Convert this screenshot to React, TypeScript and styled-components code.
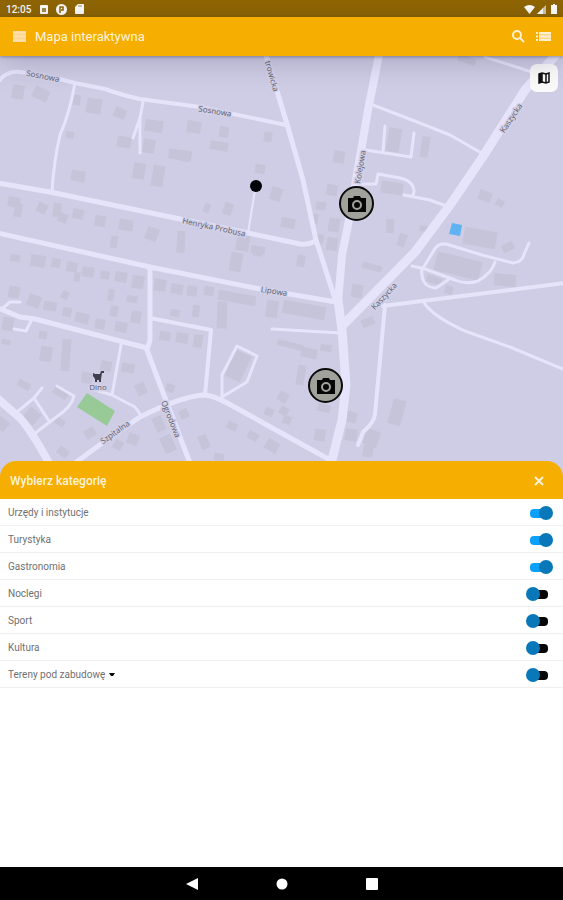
import React, { useState } from 'react';
import styled, { createGlobalStyle } from 'styled-components';

const GlobalStyle = createGlobalStyle`
  * { box-sizing: border-box; }
  body { margin: 0; background: #fff; font-family: Roboto, "Open Sans", sans-serif; }
  button { font: inherit; color: inherit; border: 0; padding: 0; background: none; cursor: pointer; }
`;

const Screen = styled.div`
  display: flex;
  flex-direction: column;
  min-height: 100vh;
`;

const StatusBar = styled.div`
  display: flex;
  align-items: center;
  justify-content: space-between;
  height: 17px;
  padding: 1px 5px 0 6px;
  background: #906600;
  color: #fff;
  font-size: 10px;
  font-weight: 500;
  svg { display: block; }
`;

const StatusGroup = styled.div<{ $gap: number }>`
  display: flex;
  align-items: center;
  gap: ${(p) => p.$gap}px;
`;

const Clock = styled.span`
  margin-right: 1px;
`;

const AppBar = styled.header`
  position: relative;
  z-index: 1;
  display: flex;
  align-items: center;
  height: 39px;
  padding: 0 12px 0 13px;
  background: #f6ae00;
  color: #fff3dc;
  box-shadow: 0 1px 3px rgba(40, 40, 70, 0.4), 0 4px 30px rgba(40, 40, 70, 0.25);
`;

const Title = styled.h1`
  flex: 1;
  margin: 0 0 0 9px;
  font-size: 13px;
  font-weight: 400;
  line-height: 16px;
`;

const IconButton = styled.button`
  display: flex;
  align-items: center;
  justify-content: center;
  svg { display: block; }
`;

const Actions = styled.div`
  display: flex;
  align-items: center;
  gap: 10px;
`;

const MapArea = styled.main`
  position: relative;
  height: 420px;
  overflow: hidden;
  background: #cfcde5;
`;

const MapDrawing = styled.svg`
  display: block;
  width: 100%;
  height: 100%;
`;

const LayerButton = styled(IconButton)`
  position: absolute;
  top: 8px;
  right: 5px;
  width: 28px;
  height: 28px;
  border-radius: 7px;
  background: #fafafa;
  color: #111;
`;

const Pin = styled.button<{ $x: number; $y: number }>`
  position: absolute;
  left: ${(p) => p.$x}px;
  top: ${(p) => p.$y}px;
  display: flex;
  align-items: center;
  justify-content: center;
  width: 35px;
  height: 35px;
  border: 2px solid #0b0b0b;
  border-radius: 50%;
  background: #a2a29c;
`;

const Sheet = styled.section`
  position: relative;
  z-index: 1;
  flex: 1;
  margin-top: -15px;
`;

const SheetHeader = styled.div`
  display: flex;
  align-items: center;
  justify-content: space-between;
  height: 38px;
  padding: 2px 18px 0 10px;
  border-radius: 16px 16px 0 0;
  background: #f6ae00;
  color: #fff3dc;
`;

const SheetTitle = styled.h2`
  margin: 0;
  font-size: 12px;
  font-weight: 500;
  line-height: 16px;
`;

const CategoryList = styled.ul`
  margin: 0;
  padding: 0;
  list-style: none;
  background: #fff;
`;

const Category = styled.li`
  display: flex;
  align-items: center;
  justify-content: space-between;
  height: 27px;
  padding: 1px 10px 0 8px;
  border-bottom: 1px solid #efefef;
  color: #707070;
  font-size: 10px;
  line-height: 12px;
`;

const CategoryName = styled.div`
  display: flex;
  align-items: center;
  gap: 4px;
`;

const Toggle = styled.input`
  position: relative;
  appearance: none;
  width: 27px;
  height: 14px;
  margin: 0;
  cursor: pointer;
  &::before {
    content: '';
    position: absolute;
    top: 3px;
    left: 4px;
    width: 18px;
    height: 9px;
    border-radius: 4px;
    background: #080604;
  }
  &::after {
    content: '';
    position: absolute;
    top: 0;
    left: 0;
    width: 14px;
    height: 14px;
    border-radius: 50%;
    background: #0878b8;
  }
  &:checked::before { background: #0ba1fb; }
  &:checked::after { left: 13px; }
`;

const NavBar = styled.nav`
  display: flex;
  align-items: center;
  justify-content: center;
  gap: 76px;
  height: 33px;
  background: #000;
  color: #fff;
`;

const NavButton = styled(IconButton)`
  width: 14px;
  height: 14px;
`;

type Building = [x: number, y: number, w: number, h: number, r?: number];

const buildings: Building[] = [
  [18, 92, 12, 14], [41, 94, 16, 12, 25], [77, 100, 7, 10], [94, 106, 15, 15], [120, 113, 12, 10, 25],
  [70, 135, 8, 7], [154, 126, 18, 12], [194, 127, 14, 12], [124, 142, 14, 11], [149, 146, 12, 14],
  [180, 155, 23, 10], [139, 171, 12, 16], [158, 176, 12, 21], [78, 176, 14, 11], [14, 202, 12, 10],
  [18, 210, 8, 14], [42, 208, 10, 10, 25], [57, 210, 8, 14], [63, 218, 9, 9, 25], [78, 214, 11, 10], [100, 221, 11, 11],
  [126, 225, 14, 11], [152, 234, 12, 13, 20], [114, 242, 7, 12], [181, 242, 8, 22, 4], [224, 132, 9, 11],
  [219, 146, 18, 9], [268, 137, 8, 10], [185, 156, 11, 11], [260, 169, 10, 9], [276, 194, 11, 13, 18],
  [207, 208, 6, 9, 20], [228, 209, 9, 12, 20], [339, 157, 11, 12], [332, 190, 11, 11], [321, 206, 10, 8],
  [288, 223, 14, 10], [334, 225, 11, 14], [315, 219, 6, 10], [332, 244, 11, 13], [243, 242, 13, 18],
  [258, 252, 9, 8], [320, 239, 7, 9], [394, 140, 13, 24], [425, 147, 8, 21], [392, 188, 22, 12],
  [390, 226, 8, 14, 2], [402, 240, 8, 13, 20], [425, 229, 11, 6], [485, 196, 13, 10, 22], [500, 203, 8, 7, 28],
  [480, 238, 33, 17, 10], [508, 247, 12, 8, -25], [467, 60, 18, 7, 20], [458, 266, 46, 19, 14],
  [372, 267, 20, 6, 16], [434, 280, 15, 7, 18], [449, 290, 8, 8, 15], [505, 280, 22, 12, 5],
  [368, 322, 13, 8, -25], [397, 412, 13, 26, 15], [372, 438, 14, 16, 20], [368, 451, 10, 12],
  [15, 258, 10, 7], [38, 261, 15, 12], [56, 263, 9, 9], [72, 267, 11, 10], [77, 277, 6, 9], [88, 272, 12, 10],
  [105, 275, 9, 8], [121, 277, 12, 10], [138, 282, 12, 13], [160, 285, 12, 12], [177, 289, 12, 10],
  [192, 291, 10, 10], [14, 292, 11, 12], [34, 301, 13, 12, 20], [50, 306, 13, 9], [65, 295, 7, 8, 30],
  [67, 312, 9, 9], [82, 318, 14, 10, 15], [111, 295, 6, 12], [132, 299, 11, 7], [114, 311, 8, 11],
  [136, 317, 10, 12], [100, 324, 10, 10], [121, 327, 12, 10], [8, 324, 11, 13], [43, 335, 8, 8],
  [46, 354, 12, 15], [66, 355, 9, 32, 4], [6, 342, 9, 5], [106, 366, 11, 10, 15], [87, 378, 11, 11],
  [128, 368, 13, 9], [165, 336, 11, 9], [182, 338, 12, 10], [198, 341, 9, 13], [175, 313, 9, 7],
  [196, 311, 7, 12], [141, 389, 10, 12, -25], [170, 388, 9, 8, 20], [24, 385, 13, 7, 28], [61, 392, 15, 10, 30],
  [32, 416, 14, 14, 40], [60, 422, 10, 7, 35], [2, 424, 12, 11, 40], [63, 452, 11, 8, 35], [90, 433, 11, 9, -30],
  [118, 445, 9, 9, 30], [133, 439, 11, 11, 20], [159, 424, 10, 15, -25], [184, 414, 9, 9, -25],
  [168, 444, 12, 17, -25], [236, 262, 12, 19, 10], [258, 250, 14, 8], [301, 261, 8, 12], [209, 291, 10, 9],
  [237, 298, 38, 10, 10], [222, 315, 10, 27, 2], [272, 309, 12, 17], [304, 310, 43, 13, 10], [357, 291, 11, 13],
  [238, 366, 17, 28, 25], [290, 345, 26, 6, 14], [309, 353, 16, 10, 12], [326, 348, 11, 7], [301, 375, 8, 20, 10],
  [283, 397, 10, 10, 30], [269, 412, 9, 8, 20], [284, 411, 9, 8, 30], [287, 420, 8, 8, 20], [232, 426, 10, 8, 25],
  [253, 436, 11, 8, 30], [204, 442, 9, 14, -25], [272, 446, 13, 11, 30], [324, 408, 13, 8, 15],
  [320, 435, 11, 12], [219, 457, 10, 7], [351, 417, 12, 11, 15], [351, 435, 12, 12],
];

const roads: [width: number, d: string][] = [
  [4, 'M-2 82Q7 70 20 72Q50 76 75 83L105 89Q125 96 140 99L200 107L286 125'],
  [3, 'M75 83Q70 112 60 135Q54 160 52 191'],
  [3, 'M143 102L140 118L133 138M140 118V153'],
  [5, 'M-2 183L50 192L180 219L248 233L300 244Q308 245 316 241'],
  [5, 'M-2 233L150 267L260 289L336 302'],
  [5, 'M266 55L287 124L303 180L316 240L336 302'],
  [8, 'M379 55L368 110L350 215L342 255L338 302'],
  [9, 'M560 50L525 90L482 158L450 205L415 252L342 326'],
  [9, 'M338 300L342 330L346 385L342 420L331 464'],
  [3, 'M373 105L425 125L450 135L485 155M485 57L532 72'],
  [3, 'M385 126L383 151M366 150L411 157L414 133'],
  [3, 'M357 184H376L378 174L400 178Q414 181 414 192Q414 198 404 195L430 200L449 207'],
  [3, 'M412 266L425 269L455 280Q466 285 478 281Q492 273 495 262'],
  [3, 'M422 270L434 250Q438 243 446 244L482 255L513 263Q523 262 524 254L529 243M422 268Q420 287 436 288L448 280'],
  [4, 'M383 306L430 300L565 283M385 305L380 360L375 414Q374 423 363 432L358 445'],
  [3, 'M423 301Q430 315 465 331L510 347L565 370'],
  [3, 'M272 329L341 333'],
  [5, 'M75 463L105 441L140 417Q180 397 203 395Q213 395 229 404L332 461'],
  [5, 'M150 267V340L147 350L162 390L190 463'],
  [4, 'M150 318L211 330L205 395'],
  [5, 'M-2 308L20 317L35 319L147 348'],
  [3, 'M3 308L10 302H20M14 329L26 331L31 321'],
  [3, 'M121 345L112 395M95 390L112 395L135 407L140 414'],
  [8, 'M-3 398L20 418Q33 433 50 465'],
  [3, 'M17 412L34 398L42 388M34 398L49 421M34 434L55 418Q72 407 74 396L57 386'],
  [3, 'M222 400V375L237 346L257 356L247 382L222 397'],
  [2, 'M255 190L248 233'],
];

const streets: [name: string, x: number, y: number, angle: number][] = [
  ['Sosnowa', 43, 76, 11],
  ['Sosnowa', 215, 111, 9],
  ['trowicka', 272, 76, 74],
  ['Henryka Probusa', 214, 227, 12],
  ['Lipowa', 274, 291, 9],
  ['Kolejowa', 360, 167, -80],
  ['Kaszycka', 511, 118, -56],
  ['Kaszycka', 384, 296, -47],
  ['Szpitalna', 115, 432, -36],
  ['Ogrodowa', 171, 419, 68],
];

function TownMap() {
  return (
    <MapDrawing viewBox="0 56 563 420" preserveAspectRatio="xMidYMin slice" role="img" aria-label="Mapa">
      <g fill="#c5c4d9">
        {buildings.map(([x, y, w, h, r = 9], i) => (
          <rect key={i} x={x - w / 2} y={y - h / 2} width={w} height={h} transform={`rotate(${r} ${x} ${y})`} />
        ))}
      </g>
      <path d="M87 393L115 411L107 426L77 407Z" fill="#98ca98" />
      <path d="M452 223L462 225L460 236L449 234Z" fill="#5fb3f2" />
      <g fill="none" stroke="#e5e4fb" strokeLinejoin="round" strokeLinecap="round">
        {roads.map(([width, d]) => (
          <path key={d} d={d} strokeWidth={width} />
        ))}
      </g>
      <g
        fontFamily='"Open Sans", "Noto Sans", sans-serif'
        fontSize="8"
        fill="#5c5c68"
        stroke="#d3d1e8"
        strokeWidth="3"
        strokeLinejoin="round"
        paintOrder="stroke"
        textAnchor="middle"
      >
        {streets.map(([name, x, y, angle]) => (
          <text key={`${name}${x}`} transform={`translate(${x} ${y}) rotate(${angle})`} y="3">
            {name}
          </text>
        ))}
        <text x="98" y="390">Dino</text>
      </g>
      <path d="M93 373L95 374H100L101 371H104V373H102L101 379H95L93 376Z" fill="#3e3e4c" />
      <path d="M95 379H101V380H95ZM95 380H97V382H95ZM99 380H101V382H99Z" fill="#3e3e4c" />
      <circle cx="256" cy="186" r="6" fill="#03030a" />
    </MapDrawing>
  );
}

function Camera() {
  return (
    <svg width="20" height="18" viewBox="0 0 20 18" aria-hidden="true">
      <path d="M1 3H6L7 1H13L14 3H19V17H1Z" fill="#070707" />
      <circle cx="10" cy="10" r="4" fill="none" stroke="#a2a29c" strokeWidth="2" />
    </svg>
  );
}

const initial = [
  { name: 'Urzędy i instytucje', on: true },
  { name: 'Turystyka', on: true },
  { name: 'Gastronomia', on: true },
  { name: 'Noclegi', on: false },
  { name: 'Sport', on: false },
  { name: 'Kultura', on: false },
  { name: 'Tereny pod zabudowę', on: false, expandable: true },
];

export default function App() {
  const [categories, setCategories] = useState(initial);
  const toggle = (index: number) =>
    setCategories((all) => all.map((c, i) => (i === index ? { ...c, on: !c.on } : c)));

  return (
    <Screen>
      <GlobalStyle />
      <StatusBar>
        <StatusGroup $gap={8}>
          <Clock>12:05</Clock>
          <svg width="8" height="9" viewBox="0 0 8 9">
            <rect width="8" height="9" rx="1" fill="#fff" />
            <path d="M2 3H6V7H2Z" fill="#a88b50" />
          </svg>
          <svg width="11" height="11" viewBox="0 0 22 22">
            <circle cx="11" cy="11" r="11" fill="#fff" />
            <path d="M8 18V6H14V12H10" fill="none" stroke="#906600" strokeWidth="3" />
          </svg>
          <svg width="9" height="10" viewBox="0 0 9 10">
            <path d="M3 0H8Q9 0 9 1V9Q9 10 8 10H1Q0 10 0 9V3Z" fill="#fff" />
            <path d="M4 1V3M6 1V3" stroke="#a88b50" />
          </svg>
        </StatusGroup>
        <StatusGroup $gap={2}>
          <svg width="11" height="9" viewBox="0 0 22 18">
            <path d="M0 4Q11 -4 22 4L11 18Z" fill="#fff" />
          </svg>
          <svg width="9" height="9" viewBox="0 0 9 9">
            <path d="M9 0V9H0Z" fill="#d5c6a3" />
            <path d="M6 3V9H0Z" fill="#fff" />
          </svg>
          <svg width="10" height="10" viewBox="0 0 10 10">
            <path d="M3 1H5V0H7V1H9V10H3Z" fill="#fff" />
          </svg>
        </StatusGroup>
      </StatusBar>

      <AppBar>
        <IconButton aria-label="Menu">
          <svg width="13" height="11" viewBox="0 0 26 22">
            <rect width="26" height="22" fill="#ffd48f" />
            <path d="M0 3H26M0 11H26M0 19H26" stroke="#ffe0b0" strokeWidth="4" />
          </svg>
        </IconButton>
        <Title>Mapa interaktywna</Title>
        <Actions>
          <IconButton aria-label="Szukaj">
            <svg width="15" height="15" viewBox="0 0 15 15" fill="none" stroke="#fff0d4" strokeWidth="2">
              <circle cx="6" cy="6" r="4" />
              <path d="M9 9L13 13" />
            </svg>
          </IconButton>
          <IconButton aria-label="Lista">
            <svg width="15" height="11" viewBox="0 0 30 22">
              <path d="M6 2H30V20H6Z" fill="#fcd48c" />
              <path d="M6 4H30M6 11H30M6 18H30M0 4H4M0 11H4M0 18H4" stroke="#fff0d4" strokeWidth="4" />
            </svg>
          </IconButton>
        </Actions>
      </AppBar>

      <MapArea>
        <TownMap />
        <Pin $x={339} $y={130} aria-label="Punkt widokowy, ulica Kolejowa"><Camera /></Pin>
        <Pin $x={308} $y={312} aria-label="Punkt widokowy, centrum"><Camera /></Pin>
        <LayerButton aria-label="Warstwy mapy">
          <svg width="12" height="12" viewBox="0 0 24 24">
            <path d="M2 4L8 2L16 4L22 2V20L16 22L8 20L2 22Z" fill="#fafafa" stroke="#111" strokeWidth="3" />
            <path d="M8 2V20M16 4V22" stroke="#111" strokeWidth="3" />
            <path d="M2 4L8 2V20L2 22Z" fill="#111" />
          </svg>
        </LayerButton>
      </MapArea>

      <Sheet>
        <SheetHeader>
          <SheetTitle>Wybierz kategorię</SheetTitle>
          <IconButton aria-label="Zamknij">
            <svg width="12" height="12" viewBox="0 0 12 12" stroke="#fff3dc" strokeWidth="2">
              <path d="M2 2L10 10M10 2L2 10" />
            </svg>
          </IconButton>
        </SheetHeader>
        <CategoryList>
          {categories.map((c, i) => (
            <Category key={c.name}>
              <CategoryName>
                <label htmlFor={`category-${i}`}>{c.name}</label>
                {c.expandable && (
                  <IconButton aria-label="Rozwiń">
                    <svg width="6" height="4" viewBox="0 0 6 4"><path d="M0 0H6L4 3H2Z" fill="#080808" /></svg>
                  </IconButton>
                )}
              </CategoryName>
              <Toggle id={`category-${i}`} type="checkbox" role="switch" checked={c.on} onChange={() => toggle(i)} />
            </Category>
          ))}
        </CategoryList>
      </Sheet>

      <NavBar>
        <NavButton aria-label="Wstecz">
          <svg width="12" height="12" viewBox="0 0 12 12"><path d="M12 0V12L0 6Z" fill="#fff" /></svg>
        </NavButton>
        <NavButton aria-label="Ekran główny">
          <svg width="12" height="12" viewBox="0 0 24 24"><circle cx="12" cy="12" r="11" fill="#fff" /></svg>
        </NavButton>
        <NavButton aria-label="Ostatnie">
          <svg width="12" height="12" viewBox="0 0 12 12"><rect width="12" height="12" rx="1" fill="#fff" /></svg>
        </NavButton>
      </NavBar>
    </Screen>
  );
}
